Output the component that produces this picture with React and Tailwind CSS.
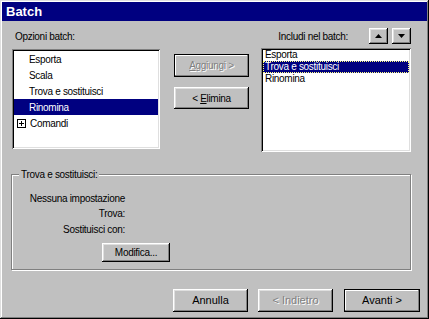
import React from 'react'

const raised = 'shadow-[inset_-1px_-1px_#000,inset_1px_1px_#fff,inset_-2px_-2px_#808080,inset_2px_2px_#dfdfdf]'
const sunken = 'shadow-[inset_1px_1px_#808080,inset_-1px_-1px_#fff,inset_2px_2px_#000,inset_-2px_-2px_#dfdfdf]'
const defaultBtn = 'border border-black shadow-[inset_-1px_-1px_#808080,inset_1px_1px_#fff]'
const small = 'text-[10px] tracking-[-0.3px]'

const Btn = ({ children, className = '', isDefault = false, disabled = false }) => (
    <div
        className={`flex items-center justify-center bg-[#c0c0c0] ${isDefault ? defaultBtn : raised} ${disabled ? 'text-[#808080] [text-shadow:1px_1px_#fff]' : 'text-black'} ${className}`}
    >
        {children}
    </div>
)

const PlusBox = () => (
    <svg width="9" height="9" viewBox="0 0 9 9" className="mr-[4px]">
        <rect x="0.5" y="0.5" width="8" height="8" fill="#fff" stroke="#000" />
        <path d="M2 4.5h5M4.5 2v5" stroke="#000" />
    </svg>
)

const Arrow = ({ up }) => (
    <div className={`w-[19px] h-[16px] bg-[#c0c0c0] flex items-center justify-center ${raised}`}>
        <svg width="7" height="4" viewBox="0 0 7 4">
            {up ? <path d="M3.5 0L7 4H0z" fill="#000" /> : <path d="M0 0h7L3.5 4z" fill="#000" />}
        </svg>
    </div>
)

const leftItems = ['Esporta', 'Scala', 'Trova e sostituisci', 'Rinomina']
const rightItems = ['Esporta', 'Trova e sostituisci', 'Rinomina']

export default function App() {
    return (
        <div className="w-[429px] h-[319px] bg-[#c0c0c0] p-[2px] font-['Liberation_Sans',Arial,sans-serif] text-black shadow-[inset_-1px_-1px_#000,inset_1px_1px_#dfdfdf,inset_-2px_-2px_#808080,inset_2px_2px_#fff] flex flex-col">
            {/* Title bar */}
            <div className="h-[19px] bg-[#000080] flex items-center pl-[4px]">
                <span className="text-white font-bold text-[13px] leading-none">Batch</span>
            </div>

            {/* Labels row */}
            <div className="mt-[7px] h-[16px] flex items-center">
                <span className={`ml-[13px] ${small}`}>Opzioni batch:</span>
                <span className={`ml-auto ${small}`}>Includi nel batch:</span>
                <div className="ml-[21px] flex gap-[4px] mr-[16px]">
                    <Arrow up />
                    <Arrow />
                </div>
            </div>

            {/* Lists row */}
            <div className="mt-[4px] flex items-start">
                <div className={`ml-[10px] mt-[1px] w-[148px] h-[100px] bg-white p-[2px] ${sunken}`}>
                    {leftItems.map((item, i) => (
                        <div
                            key={item}
                            className={`h-[16px] pl-[15px] flex items-center ${small} ${i === 3 ? 'bg-[#000080] text-white' : ''}`}
                        >
                            {item}
                        </div>
                    ))}
                    <div className={`h-[16px] pl-[3px] flex items-center ${small}`}>
                        <PlusBox />
                        Comandi
                    </div>
                </div>

                <div className={`ml-[14px] mt-[6px] flex flex-col gap-[10px] ${small}`}>
                    <Btn isDefault disabled className="w-[75px] h-[23px]">
                        <span><span className="underline">A</span>ggiungi &gt;</span>
                    </Btn>
                    <Btn className="w-[75px] h-[22px]">
                        <span>&lt; <span className="underline">E</span>limina</span>
                    </Btn>
                </div>

                <div className={`ml-[12px] w-[150px] h-[104px] bg-white p-[2px] pt-[1px] ${sunken}`}>
                    {rightItems.map((item, i) => (
                        <div
                            key={item}
                            className={`h-[12px] pl-[2px] flex items-center leading-none ${small} ${i === 1 ? 'bg-[#000080] text-white outline-1 outline-dotted outline-[#ffff80] -outline-offset-1' : ''}`}
                        >
                            {item}
                        </div>
                    ))}
                </div>
            </div>

            {/* Group box */}
            <div className="mt-[22px] ml-[9px] w-[400px] h-[96px] relative border border-[#808080] shadow-[1px_1px_0_#fff,inset_1px_1px_0_#fff]">
                <span className={`absolute left-[7px] top-[-7px] px-[2px] bg-[#c0c0c0] leading-[13px] ${small}`}>Trova e sostituisci:</span>
                <div className={`w-[113px] flex flex-col items-end mt-[16px] ${small}`}>
                    <div className="h-[15px] flex items-center">Nessuna impostazione</div>
                    <div className="h-[15px] flex items-center">Trova:</div>
                    <div className="h-[17px] flex items-center">Sostituisci con:</div>
                </div>
                <div className={`ml-[90px] mt-[5px] ${small}`}>
                    <Btn className="w-[68px] h-[19px]">Modifica...</Btn>
                </div>
            </div>

            {/* Bottom buttons */}
            <div className="mt-[19px] flex text-[11px]">
                <Btn className="ml-[171px] w-[75px] h-[23px]">Annulla</Btn>
                <Btn disabled className="ml-[10px] w-[75px] h-[23px]">&lt; Indietro</Btn>
                <Btn isDefault className="ml-[11px] w-[76px] h-[23px]">Avanti &gt;</Btn>
            </div>
        </div>
    )
}
